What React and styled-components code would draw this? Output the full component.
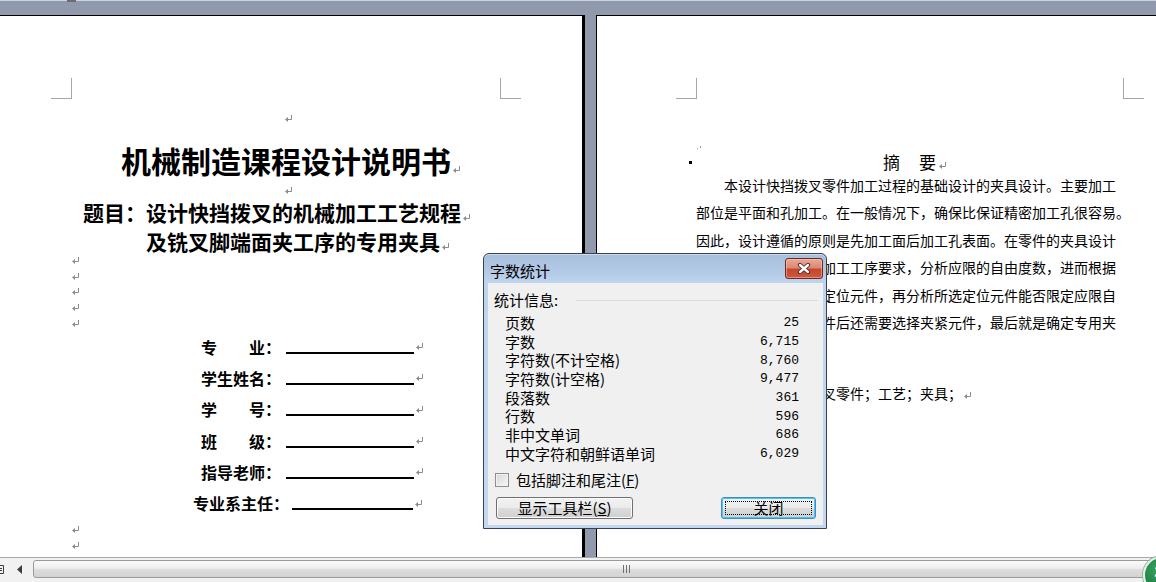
import React from "react";
import styled, { createGlobalStyle } from "styled-components";

const CJK = `"Noto Sans CJK SC", "Noto Sans", sans-serif`;
const MONO = `"Liberation Mono", "DejaVu Sans Mono", monospace`;

const GlobalStyle = createGlobalStyle`
  html, body { margin: 0; padding: 0; overflow: hidden; }
  body { font-family: ${CJK}; background: #9199ad; color: #000; }
  * { box-sizing: border-box; }
`;

/* ---------- window frame ---------- */

const Screen = styled.div`
  position: relative;
  width: 1156px;
  height: 582px;
  overflow: hidden;
  display: flex;
  flex-direction: column;
  background: #9199ad;
`;

const RulerEdge = styled.div`
  position: relative;
  flex: none;
  height: 1px;
  background: #c9d5e5;
`;

const TabMarker = styled.span`
  position: absolute;
  left: 67px;
  top: 0;
  width: 9px;
  height: 2px;
  background: #6d6d6d;
`;

const Workspace = styled.div`
  flex: 1;
  min-height: 0;
  display: flex;
  gap: 11px;
  padding-top: 14px;
  overflow: hidden;
`;

const Page = styled.div`
  flex: none;
  width: ${(p) => p.$width}px;
  background: #fff;
  border-top: 1px solid #000;
  border-left: ${(p) => (p.$edgeLeft ? "1px solid #000" : "none")};
  border-right: ${(p) => (p.$shadowRight ? "3px solid #000" : "none")};
  padding-top: 62px;
  overflow: hidden;
`;

const CropRow = styled.div`
  display: flex;
  justify-content: space-between;
  padding: 0 ${(p) => p.$right}px 0 ${(p) => p.$left}px;
`;

const CropMark = styled.span`
  width: 21px;
  height: 21px;
  border-bottom: 1px solid #a6a6a6;
  ${(p) =>
    p.$side === "left"
      ? "border-right: 1px solid #a6a6a6;"
      : "border-left: 1px solid #a6a6a6;"}
`;

const PageBody = styled.div`
  margin-left: ${(p) => p.$left}px;
  width: 428px;
  display: flex;
  flex-direction: column;
`;

/* ---------- paragraph marks ---------- */

const Pilcrow = styled.svg.attrs({ width: 8, height: 7, viewBox: "0 0 8 7" })`
  flex: none;
  display: inline-block;
  vertical-align: ${(p) => p.$lift ?? 0}px;
  margin-left: 2px;
  margin-right: ${(p) => (p.$float ? -10 : 0)}px;
`;

const ReturnMark = (props) => (
  <Pilcrow {...props}>
    <path d="M6.5 0v4.5H2.5" fill="none" stroke="#8c8c8c" />
    <path d="M0 4.5 3 2v5z" fill="#8c8c8c" />
  </Pilcrow>
);

const EmptyLine = styled.div`
  height: ${(p) => p.$h ?? 16}px;
  margin-top: ${(p) => p.$mt ?? 0}px;
  display: flex;
  align-items: center;
  justify-content: ${(p) => (p.$center ? "center" : "flex-start")};
  padding-left: ${(p) => (p.$center ? 4 : 0)}px;
`;

/* ---------- cover page ---------- */

const DocTitle = styled.h1`
  margin: 14px 0 0;
  height: 40px;
  font: 700 30px/40px ${CJK};
  text-align: center;
  white-space: nowrap;
`;

const Subtitle = styled.div`
  margin-left: 11px;
  font: 700 21px/29px ${CJK};
  white-space: nowrap;
`;

const SubtitleLine = styled.div`
  padding-left: ${(p) => p.$indent ?? 0}px;
`;

const MarkList = styled.div`
  display: flex;
  flex-direction: column;
  margin-top: ${(p) => p.$mt ?? 0}px;
`;

const FieldList = styled.div`
  display: flex;
  flex-direction: column;
`;

const FieldRow = styled.div`
  display: flex;
  align-items: center;
  height: 31.3px;
  padding-left: ${(p) => p.$indent}px;
`;

const FieldLabel = styled.span`
  font: 700 16px/20px ${CJK};
  white-space: pre;
`;

const FieldBlank = styled.span`
  flex: none;
  width: ${(p) => p.$w}px;
  height: 2px;
  background: #000;
  margin: 12px 0 0 ${(p) => p.$gap}px;
`;

/* ---------- abstract page ---------- */

const TinyMark = styled.div`
  display: flex;
  align-items: flex-start;
  height: 8px;
  margin-top: 45px;
  padding: 2px 0 0 1px;

  & > svg {
    display: block;
  }
`;

const AbstractHeading = styled.div`
  position: relative;
  height: 20px;
  font: 17px/20px ${CJK};
  letter-spacing: 1px;
  text-align: center;
  white-space: nowrap;

  &::before {
    content: "";
    position: absolute;
    left: -7px;
    top: 9px;
    width: 3px;
    height: 3px;
    background: #000;
  }
`;

const TextLine = styled.div`
  height: 27.4px;
  margin-top: ${(p) => p.$mt ?? 0}px;
  padding-left: ${(p) => (p.$indent ? 28 : 0)}px;
  font: 14px/27.4px ${CJK};
  white-space: nowrap;
`;

/* ---------- word count dialog ---------- */

const Dialog = styled.div`
  position: absolute;
  left: 483px;
  top: 253px;
  width: 344px;
  height: 276px;
  display: flex;
  flex-direction: column;
  padding: 0 3px 3px 4px;
  border: 1px solid #3a4150;
  border-radius: 6px 6px 0 0;
  background: linear-gradient(180deg, #a7bfdb 0px, #b3cae6 18px, #bfd5ee 29px, #c3d8f0 100%);
  box-shadow: inset 0 1px 0 rgba(255, 255, 255, 0.45);
  font-family: ${CJK};
`;

const TitleBar = styled.div`
  flex: none;
  height: 29px;
  display: flex;
  align-items: center;
  justify-content: space-between;
  padding-left: 2px;
`;

const TitleText = styled.span`
  margin-top: 5px;
  font-size: 15px;
  line-height: 18px;
`;

const CloseButton = styled.button`
  width: 38px;
  height: 21px;
  padding: 0;
  display: flex;
  align-items: center;
  justify-content: center;
  border: 1px solid #6b2b20;
  border-radius: 3px;
  background: linear-gradient(180deg, #e9a895 0%, #db8a75 45%, #c6472e 55%, #cc5a3e 100%);
  box-shadow: inset 0 0 0 1px rgba(255, 214, 200, 0.45);
`;

const ClientArea = styled.div`
  flex: none;
  height: 242px;
  display: flex;
  flex-direction: column;
  background: #f0f0f0;
  font-size: 15px;
`;

const SectionHeader = styled.div`
  display: flex;
  align-items: center;
  height: 18px;
  margin-top: 8px;
  padding: 0 5px 0 6px;
  line-height: 18px;
`;

const Rule = styled.span`
  flex: 1;
  height: 1px;
  margin-left: 18px;
  background: #d5dde7;
`;

const StatsList = styled.div`
  display: flex;
  flex-direction: column;
  margin-top: 5px;
  padding: 0 24px 0 17px;
`;

const StatRow = styled.div`
  display: flex;
  align-items: center;
  justify-content: space-between;
  height: 18.7px;
  line-height: 18.7px;
  white-space: nowrap;
`;

const StatValue = styled.span`
  font: 13px/18px ${MONO};
`;

const CheckRow = styled.label`
  display: flex;
  align-items: center;
  gap: 7px;
  height: 18px;
  margin-top: 7px;
  padding-left: 7px;
  line-height: 18px;
`;

const CheckBox = styled.span`
  flex: none;
  width: 14px;
  height: 14px;
  border: 1px solid #8e8f8f;
  background: linear-gradient(135deg, #d6d6d6, #f8f8f8);
  box-shadow: inset 0 0 0 1px #f1f1f1;
`;

const ButtonRow = styled.div`
  display: flex;
  justify-content: space-between;
  margin-top: 8px;
  padding: 0 7px 0 8px;
`;

const DialogButton = styled.button`
  position: relative;
  width: ${(p) => p.$w}px;
  height: 22px;
  padding: 0;
  font: 15px/20px ${CJK};
  color: #000;
  border: 1px solid ${(p) => (p.$primary ? "#3c8dc5" : "#707070")};
  border-radius: 3px;
  background: linear-gradient(180deg, #f2f2f2 0%, #ebebeb 50%, #dddddd 50%, #cfcfcf 100%);
  box-shadow: inset 0 0 0 1px ${(p) => (p.$primary ? "#48c7f4" : "#fbfbfb")};

  ${(p) =>
    p.$primary &&
    `&::after {
      content: "";
      position: absolute;
      inset: 3px;
      border: 1px dotted #000;
    }`}
`;

const Hotkey = styled.span`
  text-decoration: underline;
`;

/* ---------- horizontal scroll bar ---------- */

const HScroll = styled.div`
  flex: none;
  height: 25px;
  display: flex;
  align-items: flex-start;
  padding-top: 2px;
  border-top: 1px solid #a9a9a9;
  background: #f1f1f1;
  overflow: hidden;
`;

const ViewIcon = styled.svg.attrs({ width: 5, height: 18, viewBox: "0 0 5 18" })`
  flex: none;
`;

const ArrowCell = styled.div`
  flex: none;
  width: 28px;
  height: 18px;
  display: flex;
  align-items: center;
  justify-content: center;
`;

const Thumb = styled.div`
  flex: none;
  width: 1186px;
  height: 18px;
  display: flex;
  align-items: center;
  justify-content: center;
  border: 1px solid #9a9a9a;
  border-radius: 3px;
  background: linear-gradient(180deg, #fbfbfb 0%, #ededed 45%, #dcdcdc 55%, #d3d3d3 100%);
`;

const TrayBadge = styled.div`
  position: absolute;
  left: 1143px;
  top: 556px;
  width: 38px;
  height: 38px;
  padding: 7px 0 0 9px;
  border-radius: 50%;
  border: 2px solid #e4efe8;
  box-shadow: 0 0 0 1px #93b39e;
  background: radial-gradient(circle at 40% 35%, #3da564, #177a3d 70%);
  color: #fff;
  font: 700 14px/1 "DejaVu Sans", sans-serif;
`;

/* ---------- data ---------- */

const FIELDS = [
  { label: "专　　业：", indent: 129, w: 128, gap: 5 },
  { label: "学生姓名：", indent: 129, w: 128, gap: 5 },
  { label: "学　　号：", indent: 129, w: 128, gap: 5 },
  { label: "班　　级：", indent: 129, w: 128, gap: 5 },
  { label: "指导老师：", indent: 129, w: 128, gap: 5 },
  { label: "专业系主任：", indent: 121, w: 121, gap: 3 },
];

const ABSTRACT = [
  { text: "本设计快挡拨叉零件加工过程的基础设计的夹具设计。主要加工", indent: true },
  { text: "部位是平面和孔加工。在一般情况下，确保比保证精密加工孔很容易。" },
  { text: "因此，设计遵循的原则是先加工面后加工孔表面。在零件的夹具设计" },
  { text: "中，应先根据零件的加工工序要求，分析应限的自由度数，进而根据" },
  { text: "自由度来确定合理的定位元件，再分析所选定位元件能否限定应限自" },
  { text: "由度。确定好定位元件后还需要选择夹紧元件，最后就是确定专用夹" },
  { text: "具的其余部分。", mark: true },
];

const STATS = [
  ["页数", "25"],
  ["字数", "6,715"],
  ["字符数(不计空格)", "8,760"],
  ["字符数(计空格)", "9,477"],
  ["段落数", "361"],
  ["行数", "596"],
  ["非中文单词", "686"],
  ["中文字符和朝鲜语单词", "6,029"],
];

const marks = (n, h) =>
  Array.from({ length: n }, (_, i) => (
    <EmptyLine key={i} $h={h}>
      <ReturnMark style={{ marginLeft: 0 }} />
    </EmptyLine>
  ));

export default function App() {
  return (
    <Screen>
      <GlobalStyle />
      <RulerEdge>
        <TabMarker />
      </RulerEdge>

      <Workspace>
        {/* cover page */}
        <Page $width={585} $shadowRight>
          <CropRow $left={51} $right={61}>
            <CropMark $side="left" />
            <CropMark $side="right" />
          </CropRow>
          <PageBody $left={72}>
            <EmptyLine $center $mt={11}>
              <ReturnMark />
            </EmptyLine>
            <DocTitle>
              机械制造课程设计说明书
              <ReturnMark $float />
            </DocTitle>
            <EmptyLine $center $mt={2}>
              <ReturnMark />
            </EmptyLine>
            <Subtitle>
              <SubtitleLine>
                题目：设计快挡拨叉的机械加工工艺规程
                <ReturnMark />
              </SubtitleLine>
              <SubtitleLine $indent={63}>
                及铣叉脚端面夹工序的专用夹具
                <ReturnMark />
              </SubtitleLine>
            </Subtitle>
            <MarkList $mt={-3}>{marks(5, 15.6)}</MarkList>
            <FieldList>
              {FIELDS.map((f) => (
                <FieldRow key={f.label} $indent={f.indent}>
                  <FieldLabel>{f.label}</FieldLabel>
                  <FieldBlank $w={f.w} $gap={f.gap} />
                  <ReturnMark />
                </FieldRow>
              ))}
            </FieldList>
            <MarkList $mt={3}>{marks(3, 15.6)}</MarkList>
          </PageBody>
        </Page>

        {/* abstract page */}
        <Page $width={601} $edgeLeft>
          <CropRow $left={79} $right={53}>
            <CropMark $side="left" />
            <CropMark $side="right" />
          </CropRow>
          <PageBody $left={99}>
            <TinyMark>
              <svg width="5" height="3" viewBox="0 0 5 3">
                <rect x="0" y="2" width="1" height="1" fill="#9a9a9a" />
                <rect x="3" y="0" width="1" height="2" fill="#9a9a9a" />
              </svg>
            </TinyMark>
            <AbstractHeading>
              摘　要
              <ReturnMark $float />
            </AbstractHeading>
            {ABSTRACT.map((l, i) => (
              <TextLine key={i} $indent={l.indent}>
                {l.text}
                {l.mark && <ReturnMark />}
              </TextLine>
            ))}
            <TextLine $indent $mt={16}>
              关键词：快挡拨叉零件；工艺；夹具；
              <ReturnMark />
            </TextLine>
          </PageBody>
        </Page>
      </Workspace>

      <HScroll>
        <ViewIcon>
          <path d="M-4 5.5h7.5v8h-7.5" fill="none" stroke="#3c3c3c" />
          <path d="M-2 8.5h4M-2 10.5h4" stroke="#3c3c3c" />
        </ViewIcon>
        <ArrowCell>
          <svg width="5" height="9" viewBox="0 0 5 9">
            <path d="M5 0v9L0 4.5z" fill="#3d3d3d" />
          </svg>
        </ArrowCell>
        <Thumb>
          <svg width="7" height="8" viewBox="0 0 7 8">
            <path d="M0.5 0v8M3.5 0v8M6.5 0v8" stroke="#6f6f6f" />
          </svg>
        </Thumb>
      </HScroll>

      <TrayBadge>3</TrayBadge>

      <Dialog role="dialog" aria-label="字数统计">
        <TitleBar>
          <TitleText>字数统计</TitleText>
          <CloseButton aria-label="关闭">
            <svg width="16" height="11" viewBox="0 0 16 11">
              <path d="M4 2l8 7M12 2l-8 7" stroke="#4a2520" strokeWidth="4.2" strokeLinecap="round" />
              <path d="M4 2l8 7M12 2l-8 7" stroke="#fff" strokeWidth="2.4" strokeLinecap="round" />
            </svg>
          </CloseButton>
        </TitleBar>
        <ClientArea>
          <SectionHeader>
            统计信息:
            <Rule />
          </SectionHeader>
          <StatsList>
            {STATS.map(([k, v]) => (
              <StatRow key={k}>
                <span>{k}</span>
                <StatValue>{v}</StatValue>
              </StatRow>
            ))}
          </StatsList>
          <CheckRow>
            <CheckBox />
            <span>
              包括脚注和尾注(<Hotkey>F</Hotkey>)
            </span>
          </CheckRow>
          <ButtonRow>
            <DialogButton $w={137}>
              显示工具栏(<Hotkey>S</Hotkey>)
            </DialogButton>
            <DialogButton $w={95} $primary>
              关闭
            </DialogButton>
          </ButtonRow>
        </ClientArea>
      </Dialog>
    </Screen>
  );
}
